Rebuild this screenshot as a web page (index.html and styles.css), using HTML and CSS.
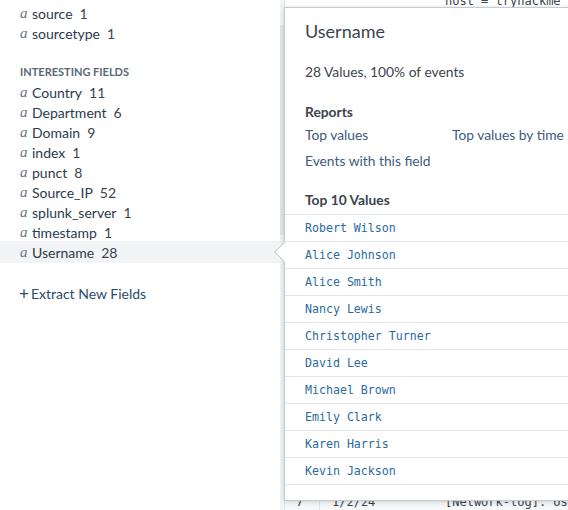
FILE: index.html
```html
<!DOCTYPE html>
<html>
<head>
<meta charset="utf-8">
<link rel="stylesheet" href="styles.css">
</head>
<body>
<div class="app">
  <aside class="sidebar">
    <ul class="fields">
      <li class="field"><span class="type">a</span><span class="name">source</span><span class="count">1</span></li>
      <li class="field"><span class="type">a</span><span class="name">sourcetype</span><span class="count">1</span></li>
    </ul>
    <div class="section-title">INTERESTING FIELDS</div>
    <ul class="fields interesting">
      <li class="field"><span class="type">a</span><span class="name">Country</span><span class="count">11</span></li>
      <li class="field"><span class="type">a</span><span class="name">Department</span><span class="count">6</span></li>
      <li class="field"><span class="type">a</span><span class="name">Domain</span><span class="count">9</span></li>
      <li class="field"><span class="type">a</span><span class="name">index</span><span class="count">1</span></li>
      <li class="field"><span class="type">a</span><span class="name">punct</span><span class="count">8</span></li>
      <li class="field"><span class="type">a</span><span class="name">Source_IP</span><span class="count">52</span></li>
      <li class="field"><span class="type">a</span><span class="name">splunk_server</span><span class="count">1</span></li>
      <li class="field"><span class="type">a</span><span class="name">timestamp</span><span class="count">1</span></li>
      <li class="field active"><span class="type">a</span><span class="name">Username</span><span class="count">28</span></li>
    </ul>
    <div class="extract"><span class="plus">+</span>Extract New Fields</div>
  </aside>
  <div class="scrollbar"><div class="thumb"></div></div>
  <main class="events">
    <div class="event-top"><span class="host">host = tryhackme</span></div>
    <div class="event-fill"></div>
    <div class="event-row"><span class="col-i">7</span><span class="col-t">1/2/24</span><span class="col-e">[Network-log]: User</span></div>

    <div class="popover">
      <div class="arrow"></div>
      <h2 class="pop-title">Username</h2>
      <p class="pop-sub">28 Values, 100% of events</p>
      <h3 class="pop-head">Reports</h3>
      <div class="reports">
        <span class="link">Top values</span>
        <span class="link">Top values by time</span>
        <span class="link">Events with this field</span>
      </div>
      <h3 class="pop-head top10">Top 10 Values</h3>
      <ul class="values">
        <li>Robert Wilson</li>
        <li>Alice Johnson</li>
        <li>Alice Smith</li>
        <li>Nancy Lewis</li>
        <li>Christopher Turner</li>
        <li>David Lee</li>
        <li>Michael Brown</li>
        <li>Emily Clark</li>
        <li>Karen Harris</li>
        <li>Kevin Jackson</li>
      </ul>
    </div>
  </main>
</div>
</body>
</html>
```

FILE: styles.css
```css
* { box-sizing: border-box; }
html, body { margin: 0; padding: 0; }
body {
  width: 568px;
  height: 510px;
  overflow: hidden;
  background: #fff;
  font-family: Lato, "Open Sans", sans-serif;
  color: #3c444d;
}
.app { display: flex; height: 510px; }

.sidebar {
  width: 280px;
  flex: none;
  background: #fff;
  padding-top: 3px;
}
.fields { list-style: none; margin: 0; padding: 0; }
.fields.interesting { margin-top: 1px; }
.field {
  height: 20px;
  display: flex;
  align-items: center;
  padding-left: 20px;
  font-size: 14px;
  color: #3c444d;
}
.field .type {
  font-family: "Liberation Serif", "DejaVu Serif", serif;
  font-style: italic;
  font-size: 15px;
  color: #6b7785;
  width: 12px;
}
.field .name { color: #2b3a4d; }
.field .count { margin-left: 7px; color: #3c444d; }
.field.active { background: #f2f4f5; height: 22px; margin-top: -1px; }
.section-title {
  margin-top: 18px;
  height: 20px;
  display: flex;
  align-items: center;
  padding-left: 20px;
  font-size: 11px;
  font-weight: 700;
  color: #5c6773;
}
.extract {
  margin-top: 20px;
  padding-left: 19px;
  font-size: 14px;
  color: #2b4b6e;
  display: flex;
  align-items: center;
  height: 20px;
}
.extract .plus { font-size: 17px; margin-right: 2px; line-height: 1; }

.scrollbar {
  width: 4px;
  flex: none;
  background: #f3f4f5;
}
.thumb {
  margin-top: 25px;
  height: 210px;
  background: #e4e7ea;
}

.events {
  flex: 1;
  position: relative;
  background: #fff;
  display: flex;
  flex-direction: column;
  border-left: 1px solid #e1e4e8;
}
.event-top {
  height: 8px;
  position: relative;
  overflow: hidden;
}
.host {
  position: absolute;
  left: 160px;
  top: -6px;
  font-family: "DejaVu Sans Mono", monospace;
  font-size: 12px;
  color: #3c444d;
}
.event-fill { flex: 1; }
.event-row {
  height: 14px;
  background: #f7f8f9;
  display: flex;
  font-family: "DejaVu Sans Mono", monospace;
  font-size: 12px;
  color: #3c444d;
  line-height: 10px;
  overflow: hidden;
  border-top: 1px solid #e1e4e8;
}
.col-i { width: 35px; padding-left: 11px; border-right: 1px solid #e1e4e8; }
.col-t { width: 125px; padding-left: 12px; }
.col-e { white-space: nowrap; }

.popover {
  position: absolute;
  left: -1px;
  top: 7px;
  width: 300px;
  height: 494px;
  background: #fff;
  border: 1px solid #c3cbd4;
  box-shadow: 0 1px 5px rgba(0,0,0,0.18);
}
.arrow {
  position: absolute;
  left: -8px;
  top: 237px;
  width: 14px;
  height: 14px;
  background: #fff;
  border-left: 1px solid #c3cbd4;
  border-bottom: 1px solid #c3cbd4;
  transform: rotate(45deg);
}
.pop-title {
  margin: 12px 0 0 20px;
  font-size: 18px;
  font-weight: 400;
  color: #3c444d;
  line-height: 22px;
}
.pop-sub {
  margin: 21px 0 0 20px;
  font-size: 13.8px;
  line-height: 18px;
  color: #3c444d;
}
.pop-head {
  margin: 22px 0 0 20px;
  font-size: 13.8px;
  font-weight: 700;
  line-height: 18px;
  color: #3c444d;
}
.reports {
  margin: 5px 0 0 20px;
  display: grid;
  grid-template-columns: 147px auto;
  row-gap: 8px;
  font-size: 13.8px;
  line-height: 18px;
}
.link { color: #3d5a80; white-space: nowrap; }
.pop-head.top10 { margin-top: 21px; }
.values {
  list-style: none;
  margin: 5px 0 0 0;
  padding: 0;
  border-top: 1px solid #e1e4e8;
}
.values li {
  height: 27px;
  padding-left: 20px;
  display: flex;
  align-items: center;
  border-bottom: 1px solid #e1e4e8;
  font-family: "DejaVu Sans Mono", monospace;
  font-size: 11.6px;
  color: #2a6aa0;
}
```
